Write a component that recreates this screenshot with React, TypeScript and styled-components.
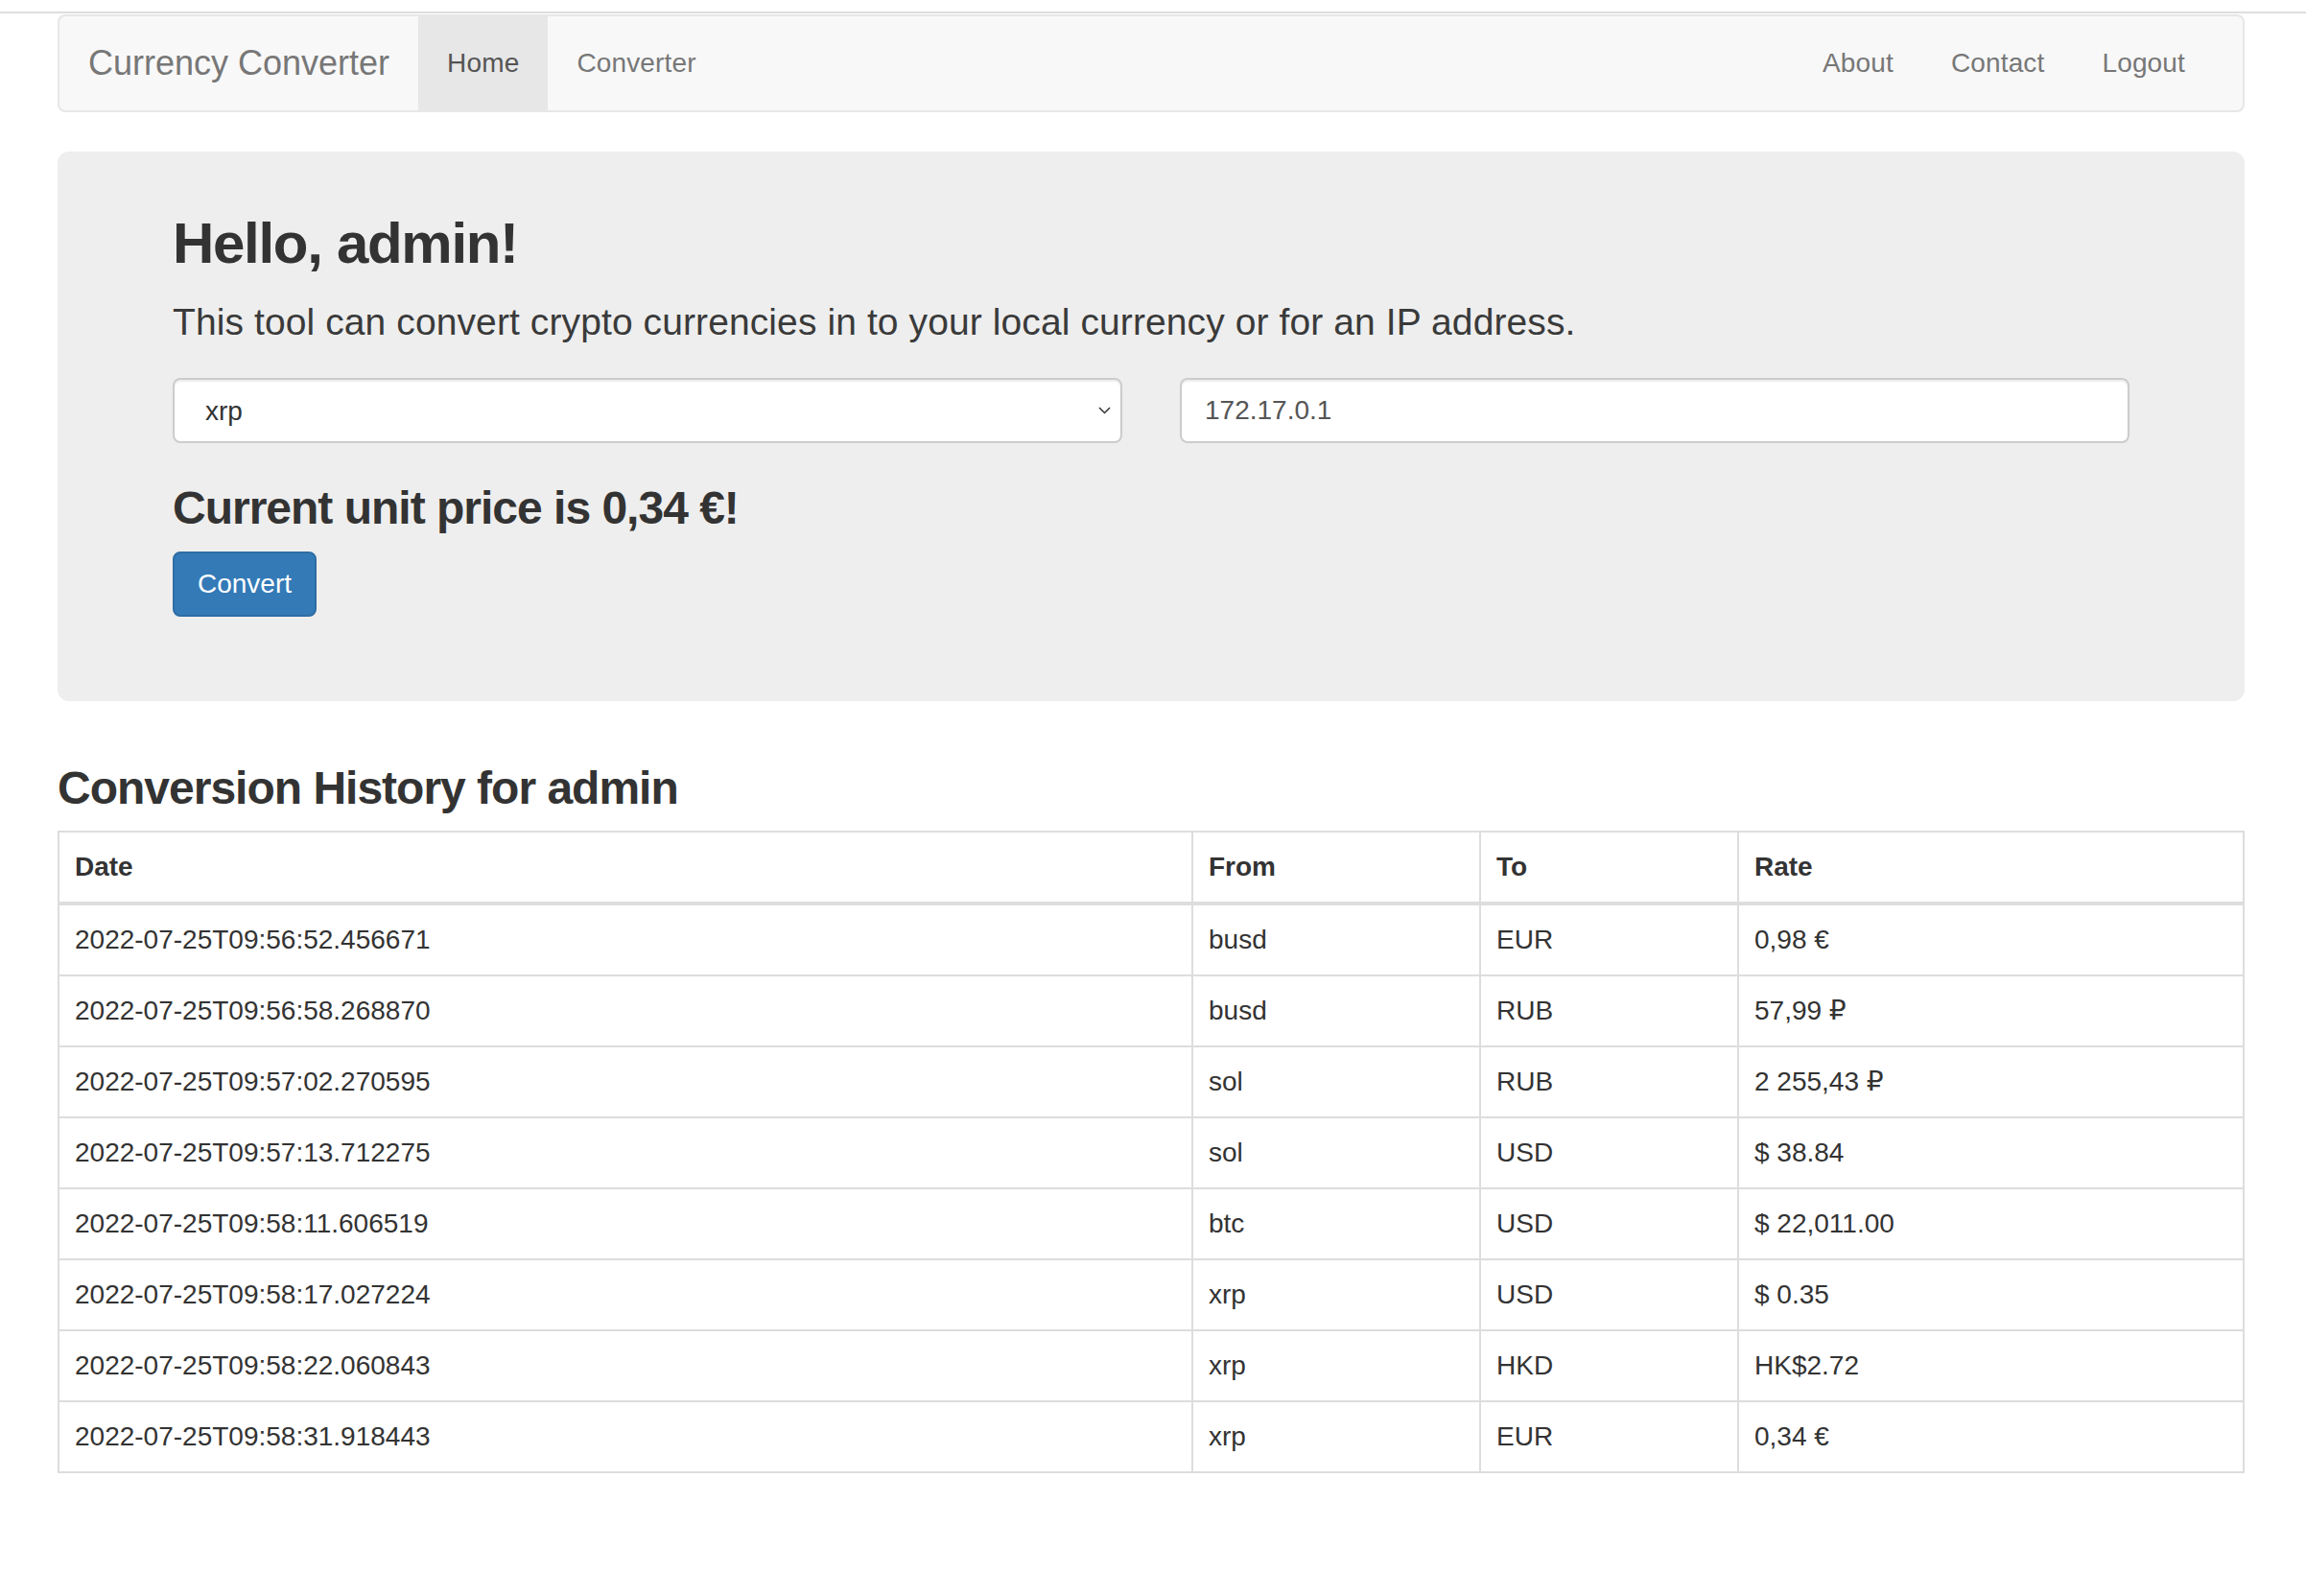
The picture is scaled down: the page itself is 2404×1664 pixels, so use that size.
import styled, { createGlobalStyle } from "styled-components";

const GlobalStyle = createGlobalStyle`
    html, body {
        margin: 0;
        padding: 0;
        background: #fff;
    }
    body {
        font-family: "Liberation Sans", Arial, "DejaVu Sans", sans-serif;
        font-size: 28px;
        color: #333;
    }
    * {
        box-sizing: border-box;
    }
`;

// thin line across the top of the window
const TopRule = styled.div`
    height: 2px;
    margin-top: 12px;
    background-color: #dedede;
`;

const Container = styled.div`
    width: 2280px;
    margin-left: 60px;
    padding-bottom: 120px;
`;

const Navbar = styled.nav`
    display: flex;
    align-items: stretch;
    height: 102px;
    margin-top: 1px;
    padding-right: 30px;
    background-color: #f8f8f8;
    border: 2px solid #e7e7e7;
    border-radius: 8px;
`;

const Brand = styled.a`
    display: flex;
    align-items: center;
    padding: 0 30px;
    font-size: 36px;
    color: #777;
    text-decoration: none;
`;

const NavList = styled.ul<{ $right?: boolean }>`
    display: flex;
    margin: 0;
    padding: 0;
    list-style: none;
    margin-left: ${props => (props.$right ? "auto" : "0")};
`;

const NavItem = styled.li<{ $active?: boolean }>`
    display: flex;
    align-items: center;
    padding: 0 30px;
    font-size: 28px;
    letter-spacing: 0.15px;
    color: ${props => (props.$active ? "#555" : "#777")};
    background-color: ${props => (props.$active ? "#e7e7e7" : "transparent")};
`;

const Jumbotron = styled.section`
    margin-top: 41px;
    padding: 63px 120px 88px;
    background-color: #eee;
    border-radius: 12px;
`;

const Title = styled.h1`
    margin: 0;
    font-size: 60px;
    line-height: 66px;
    font-weight: 700;
    letter-spacing: -1.3px;
    color: #333;
`;

const Lead = styled.p`
    margin: 21px 0 0;
    font-size: 39px;
    line-height: 56px;
    font-weight: 300;
    letter-spacing: 0.1px;
    color: #3a3a3a;
`;

const FormRow = styled.div`
    display: grid;
    grid-template-columns: 1fr 1fr;
    gap: 60px;
    margin-top: 30px;
`;

const SelectWrap = styled.div`
    position: relative;
`;

const Select = styled.select`
    display: block;
    width: 100%;
    height: 68px;
    padding: 0 60px 0 32px;
    font-family: inherit;
    font-size: 28px;
    color: #333;
    background-color: #fff;
    border: 2px solid #ccc;
    border-radius: 8px;
    box-shadow: inset 0 2px 2px rgba(0, 0, 0, 0.075);
    appearance: none;
    outline: none;
`;

const Chevron = styled.svg`
    position: absolute;
    right: 12px;
    top: 30px;
    pointer-events: none;
`;

const Input = styled.input`
    display: block;
    width: 100%;
    height: 68px;
    padding: 0 24px;
    font-family: inherit;
    font-size: 28px;
    color: #555;
    background-color: #fff;
    border: 2px solid #ccc;
    border-radius: 8px;
    box-shadow: inset 0 2px 2px rgba(0, 0, 0, 0.075);
    outline: none;
`;

const SubTitle = styled.h3<{ $top: number }>`
    margin: ${props => props.$top}px 0 0;
    font-size: 48px;
    line-height: 53px;
    font-weight: 700;
    letter-spacing: -1px;
    color: #333;
`;

const Button = styled.button`
    display: block;
    height: 68px;
    margin-top: 19px;
    padding: 0 24px;
    font-family: inherit;
    font-size: 28px;
    color: #fff;
    background-color: #337ab7;
    border: 2px solid #2e6da4;
    border-radius: 8px;
`;

const Table = styled.table`
    width: 2278px;
    margin-top: 18px;
    table-layout: fixed;
    border-collapse: collapse;
    border: 2px solid #ddd;
`;

const Th = styled.th<{ $w: number }>`
    width: ${props => props.$w}px;
    padding: 16px;
    font-size: 28px;
    line-height: 40px;
    font-weight: 700;
    text-align: left;
    color: #333;
    border: 2px solid #ddd;
    border-bottom-width: 4px;
`;

const Td = styled.td`
    padding: 16px;
    font-size: 28px;
    line-height: 40px;
    color: #333;
    border: 2px solid #ddd;
    white-space: nowrap;
`;

interface IConversion {
    date: string;
    from: string;
    to: string;
    rate: string;
}

const history: IConversion[] = [
    { date: "2022-07-25T09:56:52.456671", from: "busd", to: "EUR", rate: "0,98 €" },
    { date: "2022-07-25T09:56:58.268870", from: "busd", to: "RUB", rate: "57,99 ₽" },
    { date: "2022-07-25T09:57:02.270595", from: "sol", to: "RUB", rate: "2 255,43 ₽" },
    { date: "2022-07-25T09:57:13.712275", from: "sol", to: "USD", rate: "$ 38.84" },
    { date: "2022-07-25T09:58:11.606519", from: "btc", to: "USD", rate: "$ 22,011.00" },
    { date: "2022-07-25T09:58:17.027224", from: "xrp", to: "USD", rate: "$ 0.35" },
    { date: "2022-07-25T09:58:22.060843", from: "xrp", to: "HKD", rate: "HK$2.72" },
    { date: "2022-07-25T09:58:31.918443", from: "xrp", to: "EUR", rate: "0,34 €" },
];

function App() {
    return (
        <>
            <GlobalStyle />
            <TopRule />
            <Container>
                <Navbar>
                    <Brand href="#">Currency Converter</Brand>
                    <NavList>
                        <NavItem $active>Home</NavItem>
                        <NavItem>Converter</NavItem>
                    </NavList>
                    <NavList $right>
                        <NavItem>About</NavItem>
                        <NavItem>Contact</NavItem>
                        <NavItem>Logout</NavItem>
                    </NavList>
                </Navbar>

                <Jumbotron>
                    <Title>Hello, admin!</Title>
                    <Lead>This tool can convert crypto currencies in to your local currency or for an IP address.</Lead>
                    <FormRow>
                        <SelectWrap>
                            <Select defaultValue="xrp">
                                <option value="btc">btc</option>
                                <option value="busd">busd</option>
                                <option value="sol">sol</option>
                                <option value="xrp">xrp</option>
                            </Select>
                            <Chevron width="13" height="8" viewBox="0 0 13 8">
                                <polyline points="1,1 6.5,6.5 12,1" fill="none" stroke="#333" strokeWidth="1.5" />
                            </Chevron>
                        </SelectWrap>
                        <Input defaultValue="172.17.0.1" />
                    </FormRow>
                    <SubTitle $top={41}>Current unit price is 0,34 €!</SubTitle>
                    <Button>Convert</Button>
                </Jumbotron>

                <SubTitle $top={64}>Conversion History for admin</SubTitle>
                <Table>
                    <thead>
                        <tr>
                            <Th $w={1182}>Date</Th>
                            <Th $w={300}>From</Th>
                            <Th $w={269}>To</Th>
                            <Th $w={527}>Rate</Th>
                        </tr>
                    </thead>
                    <tbody>
                        {history.map(row => (
                            <tr key={row.date}>
                                <Td>{row.date}</Td>
                                <Td>{row.from}</Td>
                                <Td>{row.to}</Td>
                                <Td>{row.rate}</Td>
                            </tr>
                        ))}
                    </tbody>
                </Table>
            </Container>
        </>
    );
}

export default App;
